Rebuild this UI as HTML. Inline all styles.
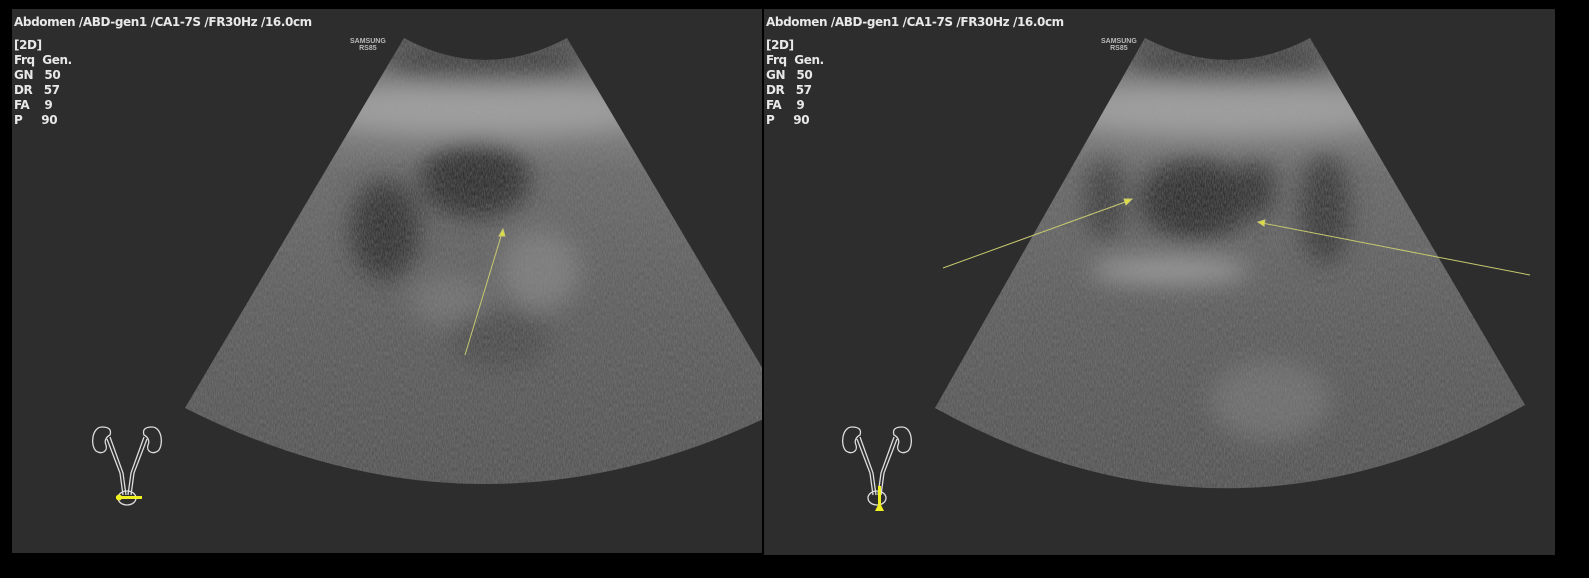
<!DOCTYPE html>
<html><head><meta charset="utf-8"><style>
html,body{margin:0;padding:0;background:#000;width:1589px;height:578px;overflow:hidden}
.t{position:absolute;font-family:"DejaVu Sans","Liberation Sans",sans-serif;color:#e8e8e8;font-size:12px;line-height:15px;font-weight:bold;letter-spacing:-0.4px}
.lg{position:absolute;font-family:"Liberation Sans",sans-serif;color:#bbb;font-size:7px;font-weight:bold;line-height:7px;text-align:center}
</style></head><body>
<svg width="1589" height="578" style="position:absolute;left:0;top:0">
<defs>
<filter id="n" x="0" y="0" width="100%" height="100%">
<feTurbulence type="fractalNoise" baseFrequency="0.9 0.25" numOctaves="2" seed="3"/>
<feColorMatrix type="matrix" values="0 0 0 0 0.3  0 0 0 0 0.3  0 0 0 0 0.3  0 0 0 0.6 -0.1"/>
</filter>
<filter id="b"><feGaussianBlur stdDeviation="12"/></filter>
<linearGradient id="g" x1="0" y1="0" x2="0" y2="1">
<stop offset="0" stop-color="#4a4a4a"/><stop offset="0.15" stop-color="#8a8a8a"/><stop offset="0.3" stop-color="#666"/><stop offset="0.6" stop-color="#5a5a5a"/><stop offset="1" stop-color="#505050"/>
</linearGradient>
<clipPath id="cl"><path d="M404,38 Q485,82 567,38 L786,408 Q485,560 185,408 Z"/></clipPath>
<clipPath id="cr"><path d="M1145,38 Q1228,82 1310,38 L1525,405 Q1228,570 935,408 Z"/></clipPath>
<clipPath id="pl"><rect x="12" y="9" width="750" height="544"/></clipPath>
</defs>
<rect x="12" y="9" width="750" height="544" fill="#2d2d2d"/>
<rect x="764" y="9" width="791" height="546" fill="#2d2d2d"/>
<g clip-path="url(#pl)"><g clip-path="url(#cl)">
<rect x="150" y="30" width="650" height="480" fill="url(#g)"/>
<g filter="url(#b)">
<ellipse cx="485" cy="60" rx="100" ry="22" fill="#3c3c3c"/>
<ellipse cx="485" cy="110" rx="170" ry="25" fill="#a0a0a0"/>
<ellipse cx="475" cy="180" rx="55" ry="38" fill="#2a2a2a"/>
<ellipse cx="385" cy="230" rx="35" ry="50" fill="#2e2e2e"/>
<ellipse cx="540" cy="270" rx="40" ry="40" fill="#7a7a7a"/>
<ellipse cx="450" cy="300" rx="40" ry="25" fill="#707070"/>
<ellipse cx="500" cy="340" rx="50" ry="30" fill="#484848"/>
</g>
<rect x="150" y="30" width="650" height="480" filter="url(#n)"/>
</g></g>
<g clip-path="url(#cr)">
<rect x="900" y="30" width="650" height="480" fill="url(#g)"/>
<g filter="url(#b)">
<ellipse cx="1228" cy="60" rx="100" ry="22" fill="#3c3c3c"/>
<ellipse cx="1228" cy="110" rx="170" ry="25" fill="#a0a0a0"/>
<ellipse cx="1195" cy="200" rx="55" ry="40" fill="#2a2a2a"/>
<ellipse cx="1255" cy="190" rx="20" ry="28" fill="#2e2e2e"/>
<ellipse cx="1325" cy="210" rx="25" ry="55" fill="#363636"/>
<ellipse cx="1105" cy="200" rx="20" ry="40" fill="#3a3a3a"/>
<ellipse cx="1170" cy="270" rx="80" ry="14" fill="#999"/>
<ellipse cx="1270" cy="400" rx="60" ry="40" fill="#6c6c6c"/>
</g>
<rect x="900" y="30" width="650" height="480" filter="url(#n)"/>
</g>
<g stroke="#c8c870" stroke-width="1" fill="#dede40">
<line x1="465" y1="355" x2="502" y2="233"/><path d="M503,229 L499,236 L505,236 Z"/>
<line x1="943" y1="268" x2="1128" y2="201"/><path d="M1132,199 L1124,199 L1126,205 Z"/>
<line x1="1530" y1="275" x2="1262" y2="223"/><path d="M1258,222 L1265,220 L1264,226 Z"/>
</g>
<g fill="none" stroke="#ddd" stroke-width="1.3">
<g transform="translate(90,425)">
<path d="M12,2 C2,2 0,20 6,26 C12,30 18,26 16,20 C14,16 16,12 20,10 C22,4 18,2 12,2Z"/>
<path d="M62,2 C72,2 74,20 68,26 C62,30 56,26 58,20 C60,16 58,12 54,10 C52,4 56,2 62,2Z"/>
<path d="M17,14 L30,48 L33,70 M20,12 L33,48 L36,70 M57,14 L44,48 L41,70 M54,12 L41,48 L38,70"/>
<ellipse cx="37" cy="73" rx="9" ry="7"/>
</g>
<g transform="translate(840,425)">
<path d="M12,2 C2,2 0,20 6,26 C12,30 18,26 16,20 C14,16 16,12 20,10 C22,4 18,2 12,2Z"/>
<path d="M62,2 C72,2 74,20 68,26 C62,30 56,26 58,20 C60,16 58,12 54,10 C52,4 56,2 62,2Z"/>
<path d="M17,14 L30,48 L33,70 M20,12 L33,48 L36,70 M57,14 L44,48 L41,70 M54,12 L41,48 L38,70"/>
<ellipse cx="37" cy="73" rx="9" ry="7"/>
</g>
</g>
<g fill="#f0f020">
<rect x="116" y="496" width="26" height="3"/><circle cx="119" cy="497.5" r="3"/>
<rect x="878" y="486" width="3" height="22"/><path d="M875,511 L884,511 L881,505 L878,505Z"/>
</g>
</svg>
<div class="t" style="left:14px;top:15px">Abdomen /ABD-gen1 /CA1-7S /FR30Hz /16.0cm</div>
<div class="t" style="left:14px;top:38px">[2D]<br>Frq&nbsp; Gen.<br>GN&nbsp;&nbsp; 50<br>DR&nbsp;&nbsp; 57<br>FA&nbsp;&nbsp;&nbsp; 9<br>P&nbsp;&nbsp;&nbsp;&nbsp; 90</div>
<div class="t" style="left:766px;top:15px">Abdomen /ABD-gen1 /CA1-7S /FR30Hz /16.0cm</div>
<div class="t" style="left:766px;top:38px">[2D]<br>Frq&nbsp; Gen.<br>GN&nbsp;&nbsp; 50<br>DR&nbsp;&nbsp; 57<br>FA&nbsp;&nbsp;&nbsp; 9<br>P&nbsp;&nbsp;&nbsp;&nbsp; 90</div>
<div class="lg" style="left:350px;top:38px">SAMSUNG<br>RS85</div>
<div class="lg" style="left:1101px;top:38px">SAMSUNG<br>RS85</div>
</body></html>
